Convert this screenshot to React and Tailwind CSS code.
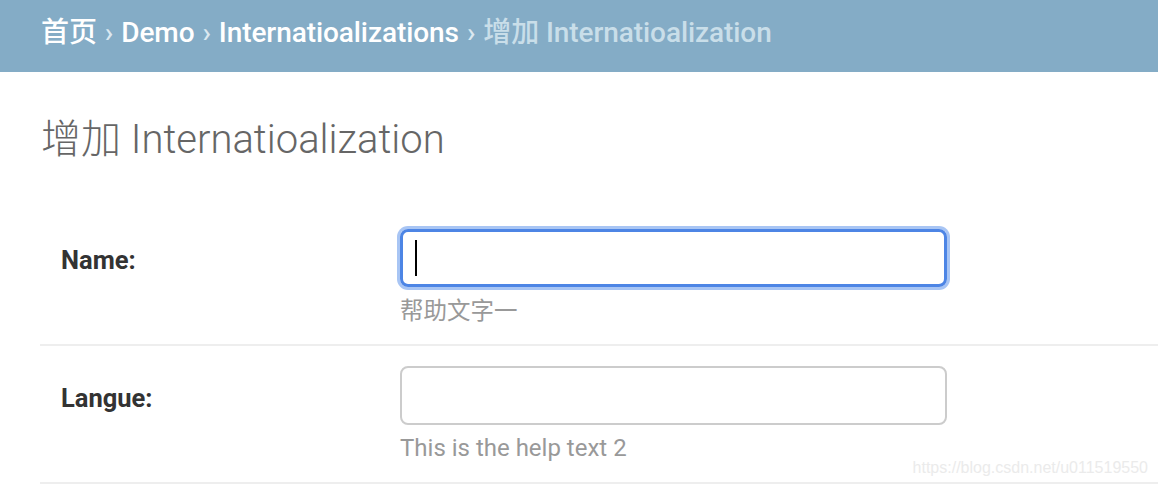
export default function App() {
  const font = { fontFamily: 'Roboto, "Noto Sans CJK SC", sans-serif' };
  return (
    <div className="w-[1158px] h-[486px] bg-white overflow-hidden relative" style={font}>
      <div className="h-[72px] bg-[#84acc6] flex items-center pl-[41px] pb-[6px] text-[28px] font-medium text-white tracking-[-0.08px]">
        <span>首页</span>
        <span className="mx-[8px] text-[#dbe8f0]">›</span>
        <span>Demo</span>
        <span className="mx-[8px] text-[#dbe8f0]">›</span>
        <span>Internatioalizations</span>
        <span className="mx-[8px] text-[#dbe8f0]">›</span>
        <span className="text-[#c9dee9]">增加 Internatioalization</span>
      </div>
      <div className="pl-[40px]">
        <h1 className="mt-[44px] ml-[1px] h-[48px] leading-[48px] text-[40px] font-light text-[#666]">增加 Internatioalization</h1>
        <div className="mt-[45px]">
          <div className="flex items-start pt-[20px] pb-[18px] border-b-2 border-[#eee]">
            <div className="w-[360px] pl-[21px] pt-[15px] text-[25.5px] font-bold text-[#333] leading-[32px]">Name:</div>
            <div className="flex flex-col">
              <div className="w-[547px] h-[58px] rounded-[8px] border-[3px] border-[#4d85e5] shadow-[0_0_0_3px_#a8c5f4] flex items-center pl-[12px]">
                <span className="w-[2px] h-[36px] bg-black"></span>
              </div>
              <div className="mt-[9px] h-[30px] leading-[30px] text-[23.5px] text-[#999]">帮助文字一</div>
            </div>
          </div>
          <div className="flex items-start pt-[20px] pb-[19px] border-b-2 border-[#eee]">
            <div className="w-[360px] pl-[21px] pt-[16px] text-[25.5px] font-bold text-[#333] leading-[32px]">Langue:</div>
            <div className="flex flex-col">
              <div className="w-[547px] h-[59px] rounded-[8px] border-2 border-[#ccc]"></div>
              <div className="mt-[8px] h-[30px] leading-[30px] text-[24px] text-[#999]">This is the help text 2</div>
            </div>
          </div>
        </div>
      </div>
      <div className="absolute right-[10px] top-[456px] text-[16px] text-[#ebebeb]" style={{ fontFamily: '"Liberation Sans", Arial, sans-serif' }}>
        https://blog.csdn.net/u011519550
      </div>
    </div>
  );
}
